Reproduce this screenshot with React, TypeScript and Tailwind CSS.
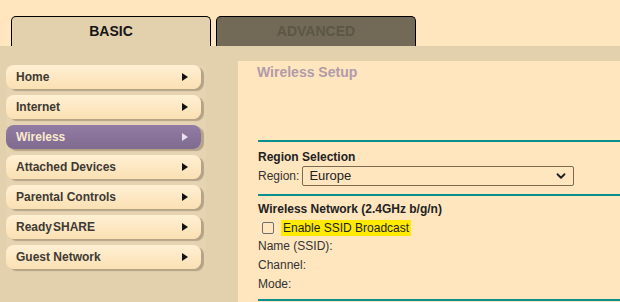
import { ChevronDown } from 'lucide-react';

const menu = ['Home', 'Internet', 'Wireless', 'Attached Devices', 'Parental Controls', 'ReadySHARE', 'Guest Network'];

function Arrow({ light }: { light?: boolean }) {
  return (
    <svg width="6" height="8" viewBox="0 0 6 8" className="shrink-0">
      <path d="M0 0L6 4L0 8Z" fill={light ? '#e9dff0' : '#111'} />
    </svg>
  );
}

function MenuItem({ label, active }: { label: string; active?: boolean }) {
  return (
    <div
      className={
        'h-[24px] w-[195px] rounded-[8px] flex items-center justify-between pl-[10px] pr-[13px] text-[12px] font-bold shadow-[3px_2px_1px_#b4a386] ' +
        (active
          ? 'bg-gradient-to-b from-[#927ca3] to-[#7f6a90] text-[#fbe9cb]'
          : 'bg-gradient-to-b from-[#fff0d3] to-[#fbe0b3] text-[#3d3a35]')
      }
    >
      <span>{label === 'ReadySHARE' ? 'Ready\u200aSHARE' : label}</span>
      <Arrow light={active} />
    </div>
  );
}

export default function App() {
  return (
    <div className="w-[620px] h-[302px] overflow-hidden bg-[#ffe6bf] text-[#222]" style={{ fontFamily: '"Liberation Sans", Arial, sans-serif' }}>
      {/* tabs */}
      <div className="h-[46px] pt-[16px] pl-[11px] flex gap-[5px]">
        <div className="w-[200px] h-[30px] rounded-t-[5px] border border-b-0 border-black bg-[#e3d0ad] flex items-center justify-center text-[14px] font-bold text-[#151515]">
          BASIC
        </div>
        <div className="w-[200px] h-[30px] rounded-t-[5px] border border-b-0 border-black bg-[#726a56] flex items-center justify-center text-[14px] font-bold text-[#5c5645]">
          ADVANCED
        </div>
      </div>

      <div className="flex bg-[#e3d0ad] h-[256px]">
        {/* sidebar */}
        <div className="w-[238px] shrink-0 pt-[19px] pl-[6px]">
          <div className="flex flex-col gap-[6px] w-[200px] bg-[#e6d3b1]">
            {menu.map((m) => (
              <MenuItem key={m} label={m} active={m === 'Wireless'} />
            ))}
          </div>
        </div>

        {/* content */}
        <div className="flex-1 mt-[15px] bg-[#ffe6bf] pl-[20px]">
          <div className="h-[79px] pt-[1px] -ml-[1px] text-[14px] font-bold text-[#b19ba9]">Wireless Setup</div>
          <div className="h-[2px] bg-[#0c8d8e]" />

          <div className="pt-[7px]">
            <div className="h-[16px] leading-[16px] text-[12px] font-bold">Region Selection</div>
            <div className="h-[22px] flex items-center text-[12px] gap-[3px]">
              <span className="text-[#333]">Region:</span>
              <div className="w-[272px] h-[20px] border border-[#7d6a4f] rounded-[2px] flex items-center justify-between pl-[6px] pr-[5px] text-[13px]">
                <span>Europe</span>
                <ChevronDown size={14} strokeWidth={3.2} />
              </div>
            </div>
          </div>
          <div className="h-[2px] bg-[#0c8d8e] mt-[7px]" />

          <div className="pt-[5px] text-[12px]">
            <div className="h-[16px] leading-[16px] font-bold">Wireless Network (2.4GHz b/g/n)</div>
            <div className="h-[18px] mt-[2px] flex items-center">
              <div className="ml-[4px] w-[12px] h-[12px] rounded-[2px] border border-[#6e6e6e]" />
              <span className="ml-[7px] bg-[#ffea00] px-[2px] h-[16px] leading-[16px] text-[#222]">Enable SSID Broadcast</span>
            </div>
            <div className="h-[19px] leading-[19px] text-[#333]">Name (SSID):</div>
            <div className="h-[19px] leading-[19px] text-[#333]">Channel:</div>
            <div className="h-[19px] leading-[19px] text-[#333]">Mode:</div>
          </div>
          <div className="h-[2px] bg-[#0c8d8e] mt-[5px]" />
        </div>
      </div>
    </div>
  );
}
